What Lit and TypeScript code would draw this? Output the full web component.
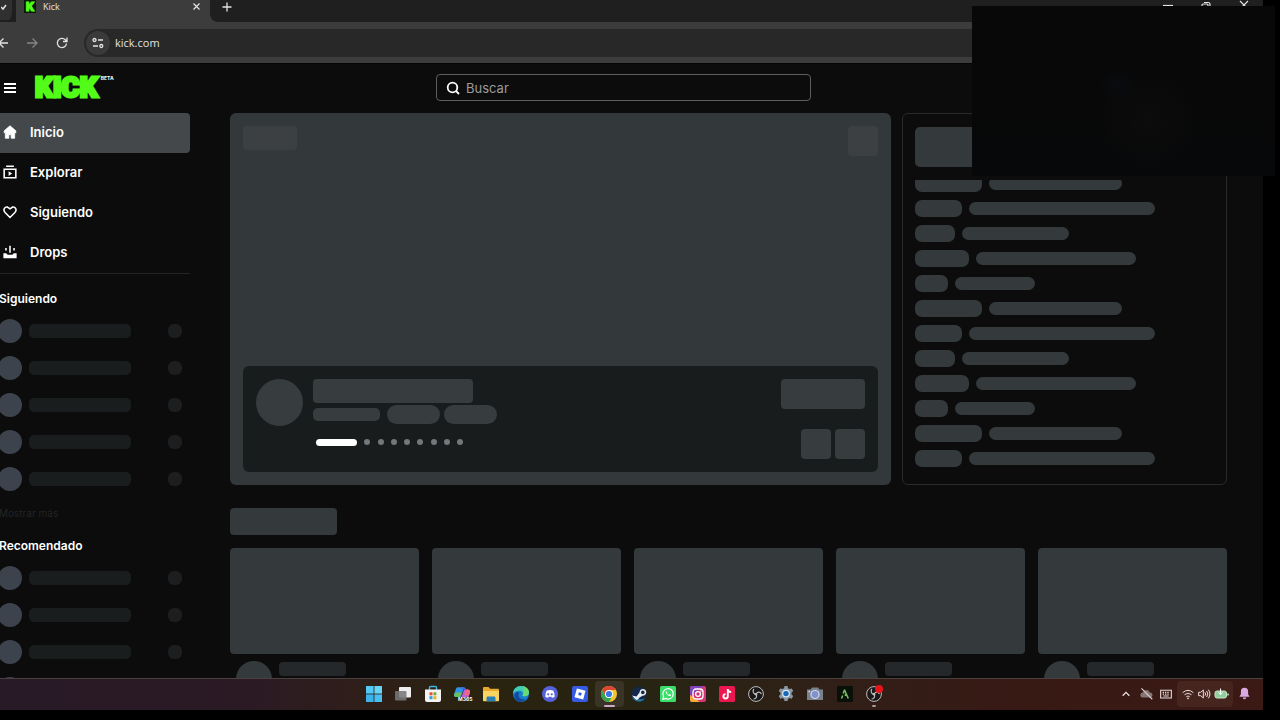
import { LitElement, html, css, svg, type TemplateResult } from "lit";
import { customElement } from "lit/decorators.js";
import { classMap } from "lit/directives/class-map.js";

interface Item {
  label: string;
  icon: TemplateResult;
  state?: string;
}

const icon = (size: number, body: TemplateResult) =>
  html`<svg width=${size} height=${size} viewBox="0 0 18 18" fill="none" aria-hidden="true">${body}</svg>`;

const obs = svg`<circle cx="9" cy="9" r="7.400" fill="#191718" stroke="#bdbdbd" stroke-width="1"/>
  <path d="M9 9.200C6.300 9 5.500 6.500 6.600 4.400M9 9.200c1.200-2.500 3.800-2.600 5.200-.6M9 9.200c1.400 2.200.4 4.300-2 4.800" stroke="#bdbdbd" stroke-width="1.200" stroke-linecap="round"/><circle cx="9" cy="9.200" r="1.300" fill="#bdbdbd"/>`;

const apps: Item[] = [
  { label: "Inicio", icon: svg`<g fill="#52c8f5"><path d="M1 1h7.600v7.600H1z"/><path d="M9.400 1H17v7.600H9.400z" fill="#65d6f8"/><path d="M1 9.400h7.600V17H1z" fill="#3bb3ec"/><path d="M9.400 9.400H17V17H9.400z" fill="#49c0f1"/></g>` },
  { label: "Vista de tareas", icon: svg`<rect x="5" y="2" width="12" height="10.500" rx="1" fill="#eee"/><rect x="1" y="6" width="11.500" height="9.500" rx="1" fill="#777" fill-opacity=".88"/>` },
  { label: "Microsoft Store", icon: svg`<path d="M5.500 5V2.500a1 1 0 0 1 1-1h5a1 1 0 0 1 1 1V5" stroke="#3eb5e8" stroke-width="1.400"/><path d="M1 4.500h16V15a2 2 0 0 1-2 2H3a2 2 0 0 1-2-2z" fill="#f3f3f3"/><path d="M5.500 7.300h3v3h-3z" fill="#e8502c"/><path d="M9.400 7.300h3v3h-3z" fill="#72b02b"/><path d="M5.500 11.200h3v3h-3z" fill="#279fe0"/><path d="M9.400 11.200h3v3h-3z" fill="#f2b01e"/>` },
  { label: "Microsoft 365 Copilot", icon: svg`<path d="M5 2.200h6L8 12H3C.8 12 .6 10 1.200 8.500L3 3.700C3.400 2.700 4 2.200 5 2.200z" fill="#2c93e6"/><path d="M3.200 7.500 1.200 9c-.6 2 .2 3 2 3h4l1.300-4.500z" fill="#68c15a"/><path d="M11 4.500h3.500c2.400 0 2.900 1.700 2.300 3.400L15.500 12H8.400z" fill="#c45bd7"/><path d="M12.800 4.500h1.700c2.400 0 2.900 1.700 2.300 3.400l-.7 2.100h-5z" fill="#ee6680"/><path d="M7.500 2.200H11c1.500 0 1.700 1.300 2.200 2.500H10z" fill="#4268dc"/><text x="5" y="16" font-family="Inter, sans-serif" font-size="5" font-weight="700" fill="#fff">M365</text>` },
  { label: "Explorador de archivos", icon: svg`<path d="M1 3.200c0-.7.5-1.200 1.200-1.200h4.300l1.600 1.800h7.700c.7 0 1.200.5 1.200 1.200V15H1z" fill="#e9a92c"/><path d="M1 6h16v9.300c0 .6-.4 1-1 1H2c-.6 0-1-.4-1-1z" fill="#f8d462"/><path d="M4.500 16.300V13c0-1 .6-1.600 1.500-1.600h6c.9 0 1.500.6 1.500 1.600v3.300z" fill="#277fb6"/>` },
  { label: "Microsoft Edge", icon: svg`<circle cx="9" cy="9" r="8" fill="#1a7ed0"/><path d="M1 9C1 4 4.500 1 9 1s8 3 8 6.500c0 2.500-2 3.800-4.200 3.800-1.800 0-2.700-.7-2-1.900C11.500 7.500 10 5.700 7.400 5.700 4.300 5.700 1.700 7 1 9z" fill="#41cdb4"/><path d="M10 1c4 .5 7 3 7 6.500 0 2.500-2 3.800-4.200 3.800-1.800 0-2.700-.7-2-1.900C12.500 6 13 3 10 1z" fill="#68dc73"/><path d="M7.200 8c-2 3 .7 7.500 6.800 6.300C10.500 18.500 2.800 17.500 2.400 11 2.800 7.500 5 6 7.200 8z" fill="#124b9b"/>` },
  { label: "Discord", icon: svg`<circle cx="9" cy="9" r="8" fill="#5661da"/><path d="M5.800 5.500Q9 4.500 12.200 5.500 14 8.300 13.700 11.800q-1.400 1-2.700 1l-.6-1H7.600l-.6 1q-1.300 0-2.700-1Q4 8.300 5.800 5.500z" fill="#fff"/><circle cx="7.200" cy="9.300" r="1.100" fill="#5661da"/><circle cx="10.800" cy="9.300" r="1.100" fill="#5661da"/>` },
  { label: "Roblox", icon: svg`<rect x="1" y="1" width="16" height="16" rx="2" fill="#365be2"/><path d="m5.900 3.500 8.600 2.300-2.300 8.700-8.700-2.300z" fill="#fff"/><path d="m7.900 7.200 2.900.8-.8 2.800-2.800-.7z" fill="#365be2"/>` },
  { label: "Google Chrome", state: "active", icon: svg`<circle cx="9" cy="9" r="8" fill="#f3c62d"/><path d="M2.070 5A8 8 0 0 1 15.930 5H9A4 4 0 0 0 5.500 11z" fill="#df4333"/><path d="M2.070 5A8 8 0 0 0 9 17l3.500-6A4 4 0 0 1 5.500 11z" fill="#35a553"/><circle cx="9" cy="9" r="4" fill="#fff"/><circle cx="9" cy="9" r="3.100" fill="#3979e6"/>` },
  { label: "Steam", icon: svg`<circle cx="9" cy="9" r="7.500" fill="#14294a"/><path d="M2 10.500 6.500 11.500l3-4q.2-3.300 3.300-3.600 3.400.2 3.500 3.500-.3 3-3.800 3.400l-3.300 2q-.6 2.300-2.700 2.200-1.800-.2-2.300-1.900z" fill="#e8edf2"/><circle cx="12.800" cy="7.400" r="1.800" fill="#14294a"/><path d="M2 12a7.600 7.600 0 0 0 13 1.500c-2 .8-3.800 1-5.600.4-.8 1.800-3.600 1.900-4.700-.6z" fill="#2378ad"/>` },
  { label: "WhatsApp", icon: svg`<rect x="1" y="1" width="16" height="16" rx="1.500" fill="#3bdc6a"/><path d="m3.800 14.300.8-2.800a5.200 5.200 0 1 1 2 1.900z" stroke="#fff" stroke-width="1.200"/><path d="M7 6.200c-1.200 1.200 1.800 5 4 4.800.8 0 1.200-.9 1-1.300l-1.300-.7-.8.8Q8.500 9.400 7.800 8l.6-.7z" fill="#fff"/>` },
  { label: "Instagram", icon: svg`<rect x="1" y="1" width="16" height="16" rx="2" fill="#d73475"/><path d="M1 3a2 2 0 0 1 2-2h12L1 11z" fill="#8144bd"/><path d="M1 10 11 17H3a2 2 0 0 1-2-2z" fill="#f4a93b"/><rect x="4" y="4" width="10" height="10" rx="3" stroke="#fff" stroke-width="1.300"/><circle cx="9" cy="9" r="2.400" stroke="#fff" stroke-width="1.300"/><circle cx="12" cy="6" r=".7" fill="#fff"/>` },
  { label: "TikTok", icon: svg`<rect x="1" y="1" width="16" height="16" rx="1.500" fill="#ec1650"/><path d="M9.800 4v7.300a2.200 2.200 0 1 1-2.200-2.200M9.800 4c.2 2 1.500 3 3.400 3.100" stroke="#fff" stroke-width="1.900"/>` },
  { label: "OBS Studio", icon: obs },
  { label: "Configuración", icon: svg`<path d="m7.500 1 3 0 .5 2.200 1.500.9 2.200-.7 1.500 2.700-1.700 1.600v1.700l1.700 1.600-1.500 2.700-2.200-.7-1.500.9-.5 2.100h-3L7 13.900 5.500 13l-2.200.7L1.800 11l1.700-1.600V7.700L1.800 6.100l1.500-2.700 2.200.7L7 3.200z" fill="#8b98a4"/><circle cx="9" cy="8.600" r="3.900" fill="#d5e8f4"/><circle cx="9" cy="8.600" r="2.700" fill="#1769b5"/>` },
  { label: "Cámara", icon: svg`<path d="M1 4.500h3.500L6 2.500h6l1.500 2H17V15H1z" fill="#77838e"/><circle cx="9" cy="9.500" r="4.600" fill="#d4dae5"/><circle cx="9" cy="9.500" r="3.400" fill="#7f91d0"/><circle cx="3.300" cy="6.500" r=".9" fill="#dbe"/>` },
  { label: "Aplicación", icon: svg`<rect x="1" y="1" width="16" height="16" rx="1" fill="#081009"/><path d="m5.500 13.500 1.200-3M8.300 4.500l4 9M8.500 5 7.200 8.500M9.500 9v2" stroke="#79b95c" stroke-width="1.600"/>` },
  { label: "OBS grabando", state: "open", icon: svg`${obs}<circle cx="14" cy="4" r="4" fill="#e5151b"/>` },
];

const navItems: Item[] = [
  { label: "Inicio", state: "active", icon: svg`<path d="M9 1 1.500 7.500V10H3v7h4.500v-4.500h3V17H15v-7h1.500V7.500z" fill="#fff" stroke="#fff" stroke-width="1" stroke-linejoin="round"/>` },
  { label: "Explorar", icon: svg`<path d="M4 1.500h10M1.500 5.500h15v11h-15z" stroke="#fff" stroke-width="2"/><path d="M7.200 8v6l4.500-3z" fill="#fff"/>` },
  { label: "Siguiendo", icon: svg`<path d="M9 16 2.700 9.700Q.5 7.200 1.600 4.800 3 2.200 5.700 2.700L9 5l3.300-2.300q2.700-.5 4.100 2.100 1.100 2.400-1.100 4.900z" stroke="#fff" stroke-width="2"/>` },
  { label: "Drops", icon: svg`<path d="M.5 10.500H4l2 2h6l2-2h3.500V17H.5z" fill="#fff"/><path d="M9 1v9M3.800 4v3M14.200 4v3" stroke="#fff" stroke-width="2"/>` },
];

const messages = [
  [67, 133], [47, 186], [40, 107], [54, 160], [33, 80], [67, 133],
  [47, 186], [40, 107], [54, 160], [33, 80], [67, 133], [47, 186],
];

@customElement("browser-chrome")
class BrowserChrome extends LitElement {
  static styles = css`
    :host { display: block; background: #1f1f1f; color: #e3e3e3; font-family: "Open Sans", "Noto Sans", sans-serif; flex: none; }
    button { border: 0; background: none; padding: 0; margin: 0; color: inherit; display: flex; align-items: center; justify-content: center; }
    svg { display: block; stroke: currentColor; flex: none; }
    .tabs { display: flex; height: 22px; }
    .search-tabs { width: 16px; height: 20px; background: #303030; border-radius: 0 0 8px 0; border-right: 4px solid #1f1f1f; box-sizing: border-box; align-items: flex-start; padding-top: 2px; }
    .tab { display: flex; align-items: flex-start; width: 194px; box-sizing: border-box; background: #3c3c3c; padding: 0 9px 0 8px; gap: 7px; }
    .favicon { width: 12px; height: 13px; background: #0b160a; color: #53fc18; font: 900 13px/13px Roboto, sans-serif; -webkit-text-stroke: 1px #53fc18; text-align: center; }
    .name { flex: 1; font-size: 9px; line-height: 13px; }
    .close { height: 13px; }
    .rest { flex: 1; background: #3c3c3c; display: flex; }
    .strip { flex: 1; background: #1f1f1f; border-radius: 0 0 0 8px; display: flex; justify-content: space-between; align-items: flex-start; padding-right: 14px; }
    .new { width: 34px; height: 14px; }
    .window { display: flex; gap: 28px; }
    .window button { height: 8px; width: 10px; }
    .bar { display: flex; align-items: center; background: #3c3c3c; height: 41px; box-sizing: border-box; padding-top: 1px; }
    .tools { display: flex; width: 84px; gap: 18px; }
    .tools .off { color: #858585; }
    .url { flex: 1; height: 28px; background: #282828; border-radius: 14px 0 0 14px; display: flex; align-items: center; gap: 5px; padding-left: 2px; }
    .info { width: 24px; height: 24px; border-radius: 12px; background: #3a3a3a; }
    input { flex: 1; border: 0; background: none; padding: 0; color: #e3e3e3; font: 11px/16px "Open Sans", sans-serif; outline: 0; }
  `;
  render() {
    return html`
      <div class="tabs">
        <button class="search-tabs" aria-label="Buscar pestañas"><svg width="10" height="10" viewBox="0 0 10 10" fill="none" stroke-width="1.500"><path d="m0 5 2 2 3-4"/></svg></button>
        <div class="tab">
          <span class="favicon">K</span><span class="name">Kick</span>
          <button class="close" aria-label="Cerrar pestaña"><svg width="9" height="9" viewBox="0 0 9 9" stroke-width="1.200"><path d="m1.500 1.500 6 6m0-6-6 6"/></svg></button>
        </div>
        <div class="rest">
          <div class="strip">
            <button class="new" aria-label="Nueva pestaña"><svg width="10" height="10" viewBox="0 0 10 10" stroke-width="1.300"><path d="M5 .5v9M.5 5h9"/></svg></button>
            <div class="window">
              <button aria-label="Minimizar"><svg width="10" height="8" viewBox="0 0 10 8" stroke-width="1.200"><path d="M0 5.500h10"/></svg></button>
              <button aria-label="Restaurar"><svg width="10" height="8" viewBox="0 0 10 8" fill="none" stroke-width="1.200"><path d="M1 8V5q0-1 1-1h4q1 0 1 1v3M3 2.500h4q2 0 2 2V7"/></svg></button>
              <button aria-label="Cerrar"><svg width="10" height="8" viewBox="0 0 10 8" stroke-width="1.200"><path d="m1 1 8 8M9 1 1 9"/></svg></button>
            </div>
          </div>
        </div>
      </div>
      <div class="bar">
        <div class="tools">
          <button aria-label="Atrás"><svg width="8" height="12" viewBox="0 0 8 12" fill="none" stroke-width="1.300"><path d="M8 6H0M3.500 1.500-1 6l4.500 4.500"/></svg></button>
          <button class="off" aria-label="Adelante"><svg width="12" height="12" viewBox="0 0 12 12" fill="none" stroke-width="1.300"><path d="M1 6h10M6.500 1.500 11 6l-4.500 4.500"/></svg></button>
          <button aria-label="Recargar"><svg width="12" height="12" viewBox="0 0 12 12" fill="none" stroke-width="1.300"><path d="M10.500 6.500A4.600 4.600 0 1 1 9.300 2.800L11 4.500M11 .5v4H7"/></svg></button>
        </div>
        <div class="url">
          <button class="info" aria-label="Información del sitio"><svg width="12" height="12" viewBox="0 0 12 12" fill="none" stroke-width="1.300"><circle cx="2.500" cy="3" r="1.500"/><path d="M6 3h5M1 9h5"/><circle cx="9.300" cy="9" r="1.500"/></svg></button>
          <input aria-label="Dirección" .value=${"kick.com"} />
        </div>
      </div>`;
  }
}

@customElement("kick-sidebar")
class KickSidebar extends LitElement {
  static styles = css`
    :host { display: block; width: 190px; flex: none; overflow: hidden; color: #fff; font-family: Inter, sans-serif; }
    a { display: flex; align-items: center; gap: 13px; height: 40px; box-sizing: border-box; padding: 0 0 2px 3px; color: inherit; text-decoration: none; font-size: 13px; font-weight: 600; border-radius: 0 4px 4px 0; }
    a.active { background: #44484b; }
    nav { border-bottom: 1px solid #242424; }
    h2 { margin: 0 0 0 -1px; font-size: 12px; line-height: 16px; font-weight: 600; padding: 17px 0 12px; }
    ul { margin: 0; padding: 0; list-style: none; display: grid; gap: 13px; }
    li { display: flex; align-items: center; height: 24px; margin-left: -2px; padding-right: 8px; }
    .avatar { width: 24px; height: 24px; border-radius: 12px; background: #3d434d; }
    .line { width: 102px; height: 14px; border-radius: 5px; background: #1a1d1e; margin-left: 7px; }
    .count { width: 14px; height: 14px; border-radius: 6px; background: #1d1e1f; margin-left: auto; }
    .more { display: block; border: 0; background: none; color: #242424; padding: 0; margin: 14px 0 0 -1px; font: 10px/16px Inter, sans-serif; }
  `;
  private rows(n: number) {
    return html`<ul>${Array.from({ length: n }, () => html`<li><span class="avatar"></span><span class="line"></span><span class="count"></span></li>`)}</ul>`;
  }
  render() {
    return html`
      <nav>${navItems.map((i) => html`<a href="#" class=${classMap({ active: i.state === "active" })}>${icon(14, i.icon)}<span>${i.label}</span></a>`)}</nav>
      <section><h2>Siguiendo</h2>${this.rows(5)}<button class="more">Mostrar más</button></section>
      <section><h2>Recomendado</h2>${this.rows(4)}</section>`;
  }
}

@customElement("kick-home")
class KickHome extends LitElement {
  static styles = css`
    :host { display: block; flex: 1; min-width: 0; padding: 0 36px 0 40px; }
    .sk { background: #34393c; border-radius: 4px; display: block; }
    .top { display: grid; grid-template-columns: minmax(0, 1fr) 325px; gap: 11px; }
    .hero { aspect-ratio: 16 / 9; box-sizing: border-box; background: #33383b; border-radius: 6px; padding: 13px; display: flex; flex-direction: column; justify-content: space-between; }
    .badges { display: flex; justify-content: space-between; align-items: flex-start; }
    .badges .sk { background: #3c4043; }
    .live { width: 54px; height: 24px; }
    .square { width: 30px; height: 30px; }
    .panel { background: #181c1d; border-radius: 6px; padding: 13px; display: flex; gap: 10px; height: 80px; }
    .panel .sk { background: #373c3f; }
    .panel .avatar { width: 47px; height: 47px; border-radius: 24px; }
    .info { flex: 1; display: flex; flex-direction: column; }
    .title { width: 160px; height: 24px; }
    .tags { display: flex; align-items: center; height: 24px; gap: 4px; }
    .tags .sk { width: 53px; height: 19px; border-radius: 10px; }
    .tags .category { width: 67px; height: 13px; border-radius: 5px; margin-right: 3px; }
    .dots { display: flex; align-items: center; justify-content: space-between; width: 147px; margin: 12px 3px 0; }
    .dots button { width: 6px; height: 6px; border: 0; padding: 0; border-radius: 3px; background: #74777a; }
    .dots .current { width: 41px; height: 7px; border-radius: 4px; background: #fff; }
    .actions { display: flex; flex-direction: column; justify-content: space-between; align-items: flex-end; }
    .follow { width: 84px; height: 30px; }
    .pair { display: flex; gap: 4px; }
    .chat { box-sizing: border-box; border: 1px solid #292a2b; border-radius: 6px; padding: 13px 12px 17px; display: flex; flex-direction: column; gap: 13px; height: 0; min-height: 100%; }
    .pinned { height: 40px; flex: none; border-radius: 5px; }
    .log { flex: 1; min-height: 0; overflow: hidden; display: flex; flex-direction: column; justify-content: flex-end; gap: 8px; }
    .msg { display: flex; gap: 7px; align-items: center; height: 17px; flex: none; }
    .msg .user { height: 17px; border-radius: 7px; }
    .msg .text { height: 13px; border-radius: 7px; }
    .heading { width: 107px; height: 27px; margin: 23px 0 13px; }
    .cards { display: grid; grid-template-columns: repeat(5, minmax(0, 1fr)); gap: 13px; }
    .thumb { aspect-ratio: 16 / 9; }
    .meta { display: flex; gap: 7px; padding: 7px 6px; }
    .meta .avatar { width: 36px; height: 36px; border-radius: 18px; }
    .meta .name { width: 67px; height: 14px; margin-top: 1px; background: #25282a; }
  `;
  render() {
    return html`
      <div class="top">
        <section class="hero">
          <div class="badges"><span class="sk live"></span><span class="sk square"></span></div>
          <div class="panel">
            <span class="sk avatar"></span>
            <div class="info">
              <span class="sk title"></span>
              <div class="tags"><span class="sk category"></span><span class="sk"></span><span class="sk"></span></div>
              <div class="dots">${Array.from({ length: 9 }, (_, i) => html`<button class=${classMap({ current: i === 0 })} aria-label=${`Destacado ${i + 1}`}></button>`)}</div>
            </div>
            <div class="actions"><span class="sk follow"></span><div class="pair"><span class="sk square"></span><span class="sk square"></span></div></div>
          </div>
        </section>
        <aside class="chat">
          <span class="sk pinned"></span>
          <div class="log">${messages.map(([u, t]) => html`<div class="msg"><span class="sk user" style="width:${u}px"></span><span class="sk text" style="width:${t}px"></span></div>`)}</div>
        </aside>
      </div>
      <span class="sk heading"></span>
      <div class="cards">${Array.from({ length: 5 }, () => html`<article><span class="sk thumb"></span><div class="meta"><span class="sk avatar"></span><span class="sk name"></span></div></article>`)}</div>`;
  }
}

@customElement("task-bar")
class TaskBar extends LitElement {
  static styles = css`
    :host { display: grid; grid-template-columns: 359fr 530px 364fr; align-items: center; height: 32px; flex: none; box-sizing: border-box; padding: 0 10px 2px 0; border-top: 1px solid #4b4040; background: linear-gradient(90deg, #281a27 0%, #2b1a24 20%, #2f1e1a 28%, #29230f 38%, #282413 53%, #302017 65%, #371a15 78%, #3b1914 100%); }
    button { border: 0; background: none; padding: 0; display: flex; align-items: center; justify-content: center; height: 26px; position: relative; border-radius: 4px; color: #e9dede; }
    svg { display: block; overflow: visible; }
    .apps { grid-column: 2; display: grid; grid-template-columns: repeat(18, 1fr); }
    .active { background: #3a3426; }
    .active::after, .open::after { content: ""; position: absolute; bottom: 0; width: 4px; height: 2px; border-radius: 1px; background: #a59a94; }
    .active::after { width: 11px; background: #d0a8cc; }
    .tray { display: flex; justify-content: flex-end; align-items: center; gap: 2px; }
    .tray > button { width: 18px; }
    .tray .status { width: 56px; gap: 4px; background: #47251f; }
  `;
  render() {
    return html`
      <nav class="apps">${apps.map((a) => html`<button class=${classMap({ active: a.state === "active", open: a.state === "open" })} aria-label=${a.label}>${icon(18, a.icon)}</button>`)}</nav>
      <div class="tray">
        <button aria-label="Iconos ocultos">${icon(12, svg`<path d="m4 11.500 5-5 5 5" stroke="currentColor" stroke-width="2"/>`)}</button>
        <button aria-label="OneDrive">${icon(13, svg`<path d="M4 14.500a3.500 3.500 0 0 1 0-7 5 5 0 0 1 9.500 0 3.500 3.500 0 0 1 .5 7z" fill="#857574"/><path d="m2 2 15 15" stroke="#d8cccb" stroke-width="1.600"/>`)}</button>
        <button aria-label="Teclado">${icon(12, svg`<path d="M1 3.500h16v11.500H1zM5 12h8" stroke="currentColor" stroke-width="1.600"/><path d="M4 6.500h10M4 9.300h10" stroke="currentColor" stroke-width="1.800" stroke-dasharray="2 1.500"/>`)}</button>
        <button class="status" aria-label="Red, sonido y batería">
          ${icon(12, svg`<path d="M1 7q8-7 16 0M3.800 10q5.200-4.500 10.400 0M6.500 13q2.500-2 5 0" stroke="currentColor" stroke-width="1.500"/><circle cx="9" cy="15.500" r="1.300" fill="currentColor"/>`)}
          ${icon(12, svg`<path d="M1 6.500h3L8 3v12l-4-3.500H1zM10.500 6.500q2 2.500 0 5M13 4.500q3.500 4.500 0 9M15.500 2.500q4.800 6.500 0 13" stroke="currentColor" stroke-width="1.500"/>`)}
          <svg width="15" height="12" viewBox="0 0 15 12" fill="none"><rect x="1" y="3" width="11.500" height="7" rx="2" fill="#91cf9e" stroke="#c5e5c9"/><path d="M14 5.500v2" stroke="#c5e5c9" stroke-width="1.500"/><path d="M6.500.5v6M4.500 4.500l2 2 2-2" stroke="#fff"/></svg>
        </button>
        <button aria-label="Notificaciones">${icon(13, svg`<path d="M9 1a5 5 0 0 0-5 5v4l-2 3.500h14L14 10V6a5 5 0 0 0-5-5zM6.500 14.500a2.500 2.500 0 0 0 5 0z" fill="#d9a9e0"/>`)}</button>
      </div>`;
  }
}

@customElement("app-root")
class AppRoot extends LitElement {
  static styles = css`
    :host { display: flex; box-sizing: border-box; height: 100vh; background: #000; padding: 0 17px 10px 0; position: relative; overflow: hidden; font-family: Inter, sans-serif; }
    .screen { flex: 1; min-width: 0; display: flex; flex-direction: column; background: #0c0c0c; }
    header { display: grid; grid-template-columns: 1fr 375px 1fr; align-items: center; height: 50px; padding: 0 16px 2px 0; box-sizing: border-box; border-top: 1px solid #050505; flex: none; }
    .brand { display: flex; align-items: center; gap: 19px; padding-left: 4px; }
    .menu { border: 0; padding: 0; background: none; display: flex; }
    .logo { display: flex; align-items: flex-start; gap: 3px; color: #53fc18; text-decoration: none; font: 900 28px/26px Roboto, sans-serif; -webkit-text-stroke: 3px #53fc18; }
    .beta { color: #fff; font: 700 5px/6px Inter, sans-serif; -webkit-text-stroke: 0; }
    .search { display: flex; align-items: center; gap: 6px; height: 27px; border: 1px solid #5b5d5e; border-radius: 4px; box-sizing: border-box; padding: 0 9px; }
    .search input { flex: 1; min-width: 0; background: none; border: 0; outline: 0; padding: 0; color: #fff; font: 13px/20px Inter, sans-serif; }
    .search input::placeholder { color: #9a9c9d; opacity: 1; }
    .page { flex: 1; min-height: 0; display: flex; overflow: hidden; }
    .camera { position: absolute; top: 6px; right: 5px; width: 303px; height: 170px; background: radial-gradient(circle at 48% 47%, #090c10 0, transparent 18px), radial-gradient(circle at 58% 68%, #0c0c0c 0, transparent 50px), linear-gradient(#080808 55%, #07080a); }
  `;
  render() {
    return html`
      <div class="screen">
        <browser-chrome></browser-chrome>
        <header>
          <div class="brand">
            <button class="menu" aria-label="Menú"><svg width="12" height="12" viewBox="0 0 12 12" stroke="#fff" stroke-width="2"><path d="M0 2h12M0 6h12M0 10h12"/></svg></button>
            <a class="logo" href="#">KICK<span class="beta">BETA</span></a>
          </div>
          <label class="search">
            <svg width="14" height="14" viewBox="0 0 14 14" fill="none" stroke="#fff" stroke-width="1.800"><circle cx="6.500" cy="6.500" r="4.800"/><path d="m10 10 3 3"/></svg>
            <input type="search" aria-label="Buscar" placeholder="Buscar" />
          </label>
        </header>
        <main class="page"><kick-sidebar></kick-sidebar><kick-home></kick-home></main>
        <task-bar></task-bar>
      </div>
      <div class="camera"></div>`;
  }
}
